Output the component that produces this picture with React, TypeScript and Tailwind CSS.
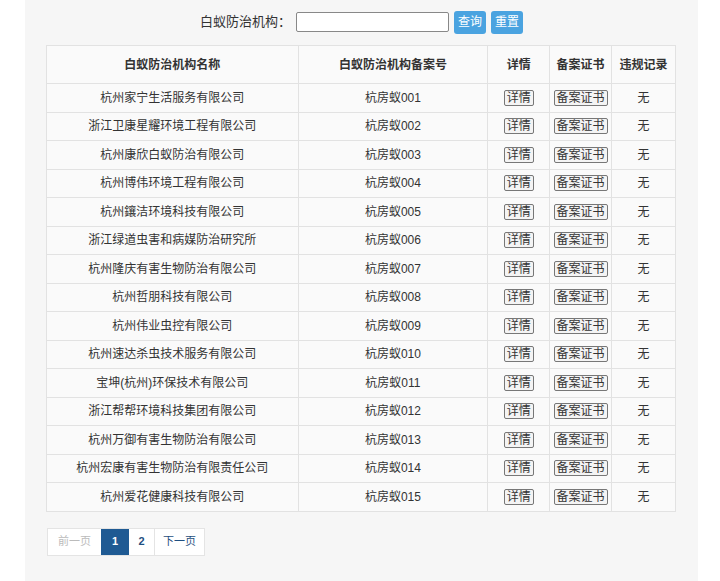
const rows = [
  "杭州家宁生活服务有限公司","浙江卫康星耀环境工程有限公司","杭州康欣白蚁防治有限公司","杭州博伟环境工程有限公司","杭州鑲洁环境科技有限公司","浙江绿道虫害和病媒防治研究所","杭州隆庆有害生物防治有限公司","杭州哲朋科技有限公司","杭州伟业虫控有限公司","杭州速达杀虫技术服务有限公司","宝坤(杭州)环保技术有限公司","浙江帮帮环境科技集团有限公司","杭州万御有害生物防治有限公司","杭州宏康有害生物防治有限责任公司","杭州爱花健康科技有限公司",
];
const btn = "border border-[#777] rounded-[2px] bg-[#f4f4f4] px-[2px] leading-[16px] text-[12px] text-[#333]";
export default function App() {
  return (
    <div className="w-[720px] h-[581px] bg-white" style={{ fontFamily: '"Liberation Sans","Noto Sans CJK SC",sans-serif' }}>
      <div className="ml-[25px] w-[673px] h-full bg-[#f6f6f6] pt-[10px]">
        <div className="flex items-center justify-center gap-[5px] h-[24px] text-[13px] text-[#333]">
          <span>白蚁防治机构：</span>
          <div className="w-[153px] h-[20px] border border-[#888] bg-white rounded-[2px]" />
          <button className="h-[23px] px-[4px] bg-[#4aa3e0] text-white text-[12px] rounded-[3px]">查询</button>
          <button className="h-[23px] px-[4px] bg-[#4aa3e0] text-white text-[12px] rounded-[3px]">重置</button>
        </div>
        <table className="ml-[21px] mt-[11px] w-[630px] border-collapse text-[12px] text-[#333] bg-[#fafafa]">
          <colgroup>
            <col className="w-[252px]" /><col className="w-[190px]" /><col className="w-[62px]" /><col className="w-[62px]" /><col className="w-[64px]" />
          </colgroup>
          <thead>
            <tr className="h-[38px] font-bold text-[12px]">
              {["白蚁防治机构名称","白蚁防治机构备案号","详情","备案证书","违规记录"].map(h => (
                <th key={h} className="border border-[#e2e2e2] font-bold">{h}</th>
              ))}
            </tr>
          </thead>
          <tbody>
            {rows.map((r, i) => (
              <tr key={r} className="h-[28.5px] text-center">
                <td className="border border-[#e2e2e2]">{r}</td>
                <td className="border border-[#e2e2e2]">杭房蚁{String(i + 1).padStart(3, "0")}</td>
                <td className="border border-[#e2e2e2]"><span className={btn}>详情</span></td>
                <td className="border border-[#e2e2e2]"><span className={btn}>备案证书</span></td>
                <td className="border border-[#e2e2e2]">无</td>
              </tr>
            ))}
          </tbody>
        </table>
        <div className="ml-[22px] mt-[16px] flex h-[28px] text-[11px] border border-[#e4e4e4] w-fit bg-white">
          <span className="px-[10px] flex items-center text-[#bbb]">前一页</span>
          <span className="w-[28px] flex items-center justify-center bg-[#1f5a93] text-white font-bold">1</span>
          <span className="w-[25px] flex items-center justify-center text-[#1f4f80] font-bold">2</span>
          <span className="px-[8px] flex items-center border-l border-[#e4e4e4] text-[#1f4f80]">下一页</span>
        </div>
      </div>
    </div>
  );
}
